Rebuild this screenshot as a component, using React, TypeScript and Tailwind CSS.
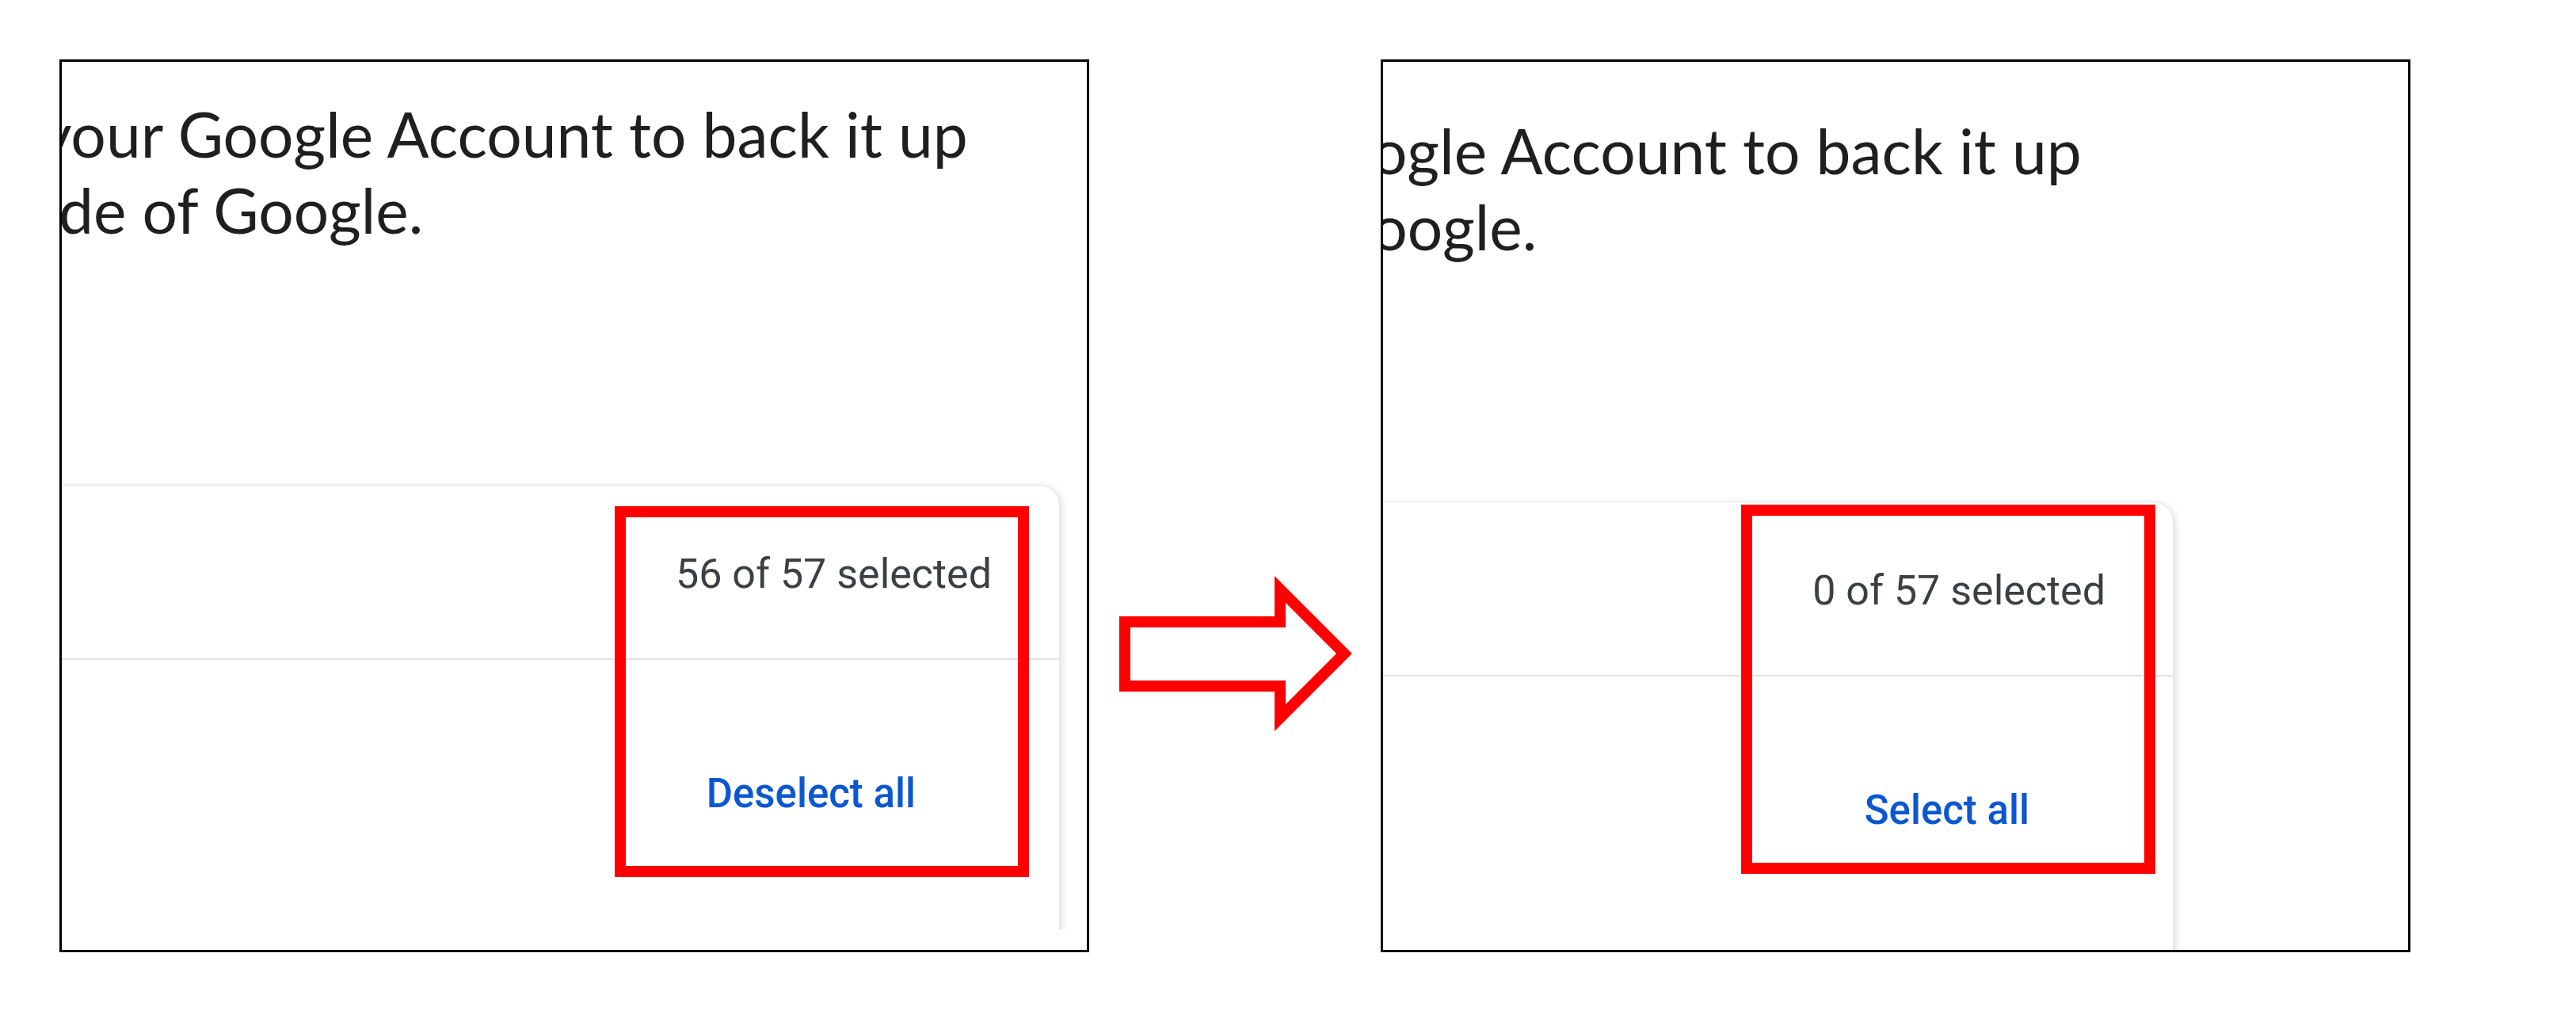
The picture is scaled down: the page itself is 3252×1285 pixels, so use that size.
import React from 'react';

type SceneProps = {
  count: string;
  action: string;
  shiftClass: string;
  clipClass: string;
  boxClass: string;
};

function Scene({ count, action, shiftClass, clipClass, boxClass }: SceneProps) {
  return (
    <div className="relative w-[1300px] h-[1127px] border-[3px] border-black overflow-hidden bg-white">
      {/* clipped screenshot of the page */}
      <div className={`overflow-hidden ${clipClass}`}>
        <div className={`w-[1600px] ${shiftClass}`}>
          {/* Heading */}
          <div
            className="pt-[43px] text-[78.5px] leading-[96px] text-[#1f1f1f] whitespace-nowrap"
            style={{ fontFamily: 'Lato, "Open Sans", sans-serif' }}
          >
            <div className="-ml-[28px]">your Google Account to back it up</div>
            <div className="-ml-[4px]">de of Google.</div>
          </div>

          {/* Card */}
          <div
            className="mt-[299px] -ml-[40px] w-[1300px] h-[640px] bg-white border border-[#e6e6e6] rounded-tr-[26px] shadow-[3px_2px_8px_rgba(60,64,67,0.16)]"
            style={{ fontFamily: 'Roboto, "Liberation Sans", sans-serif' }}
          >
            <div className="h-[218px] pt-[82px] pr-[85px] flex justify-end">
              <span className="text-[52px] leading-[60px] text-[#3c4043]">{count}</span>
            </div>
            <div className="h-[2px] bg-[#e0e2e6]" />
            <div className="pt-[139px] pr-[181px] flex justify-end">
              <button className="text-[51px] leading-[60px] font-medium text-[#0b57d0]">{action}</button>
            </div>
          </div>
        </div>
      </div>

      {/* Red annotation */}
      <div className={`absolute border-[14px] border-[#ff0000] ${boxClass}`} />
    </div>
  );
}

function Arrow() {
  return (
    <svg width="310" height="210" viewBox="1405 720 310 210" className="ml-[30px] mt-[645px] shrink-0">
      <polygon
        points="1420,785 1616,785 1616,744 1697,825 1616,906 1616,866 1420,866"
        fill="white"
        stroke="#ff0000"
        strokeWidth="14"
        strokeLinejoin="miter"
      />
    </svg>
  );
}

export default function App() {
  return (
    <div className="w-[3252px] h-[1285px] bg-white flex items-start pl-[75px] pt-[75px]">
      <div className="shrink-0">
        <Scene
          count="56 of 57 selected"
          action="Deselect all"
          shiftClass="ml-0 mt-0"
          clipClass="h-[1095px]"
          boxClass="left-[698px] top-[561px] w-[523px] h-[468px]"
        />
      </div>
      <Arrow />
      <div className="shrink-0 ml-[28px]">
        <Scene
          count="0 of 57 selected"
          action="Select all"
          shiftClass="-ml-[262px] mt-[21px]"
          clipClass="h-[1121px]"
          boxClass="left-[452px] top-[559px] w-[523px] h-[466px]"
        />
      </div>
    </div>
  );
}
